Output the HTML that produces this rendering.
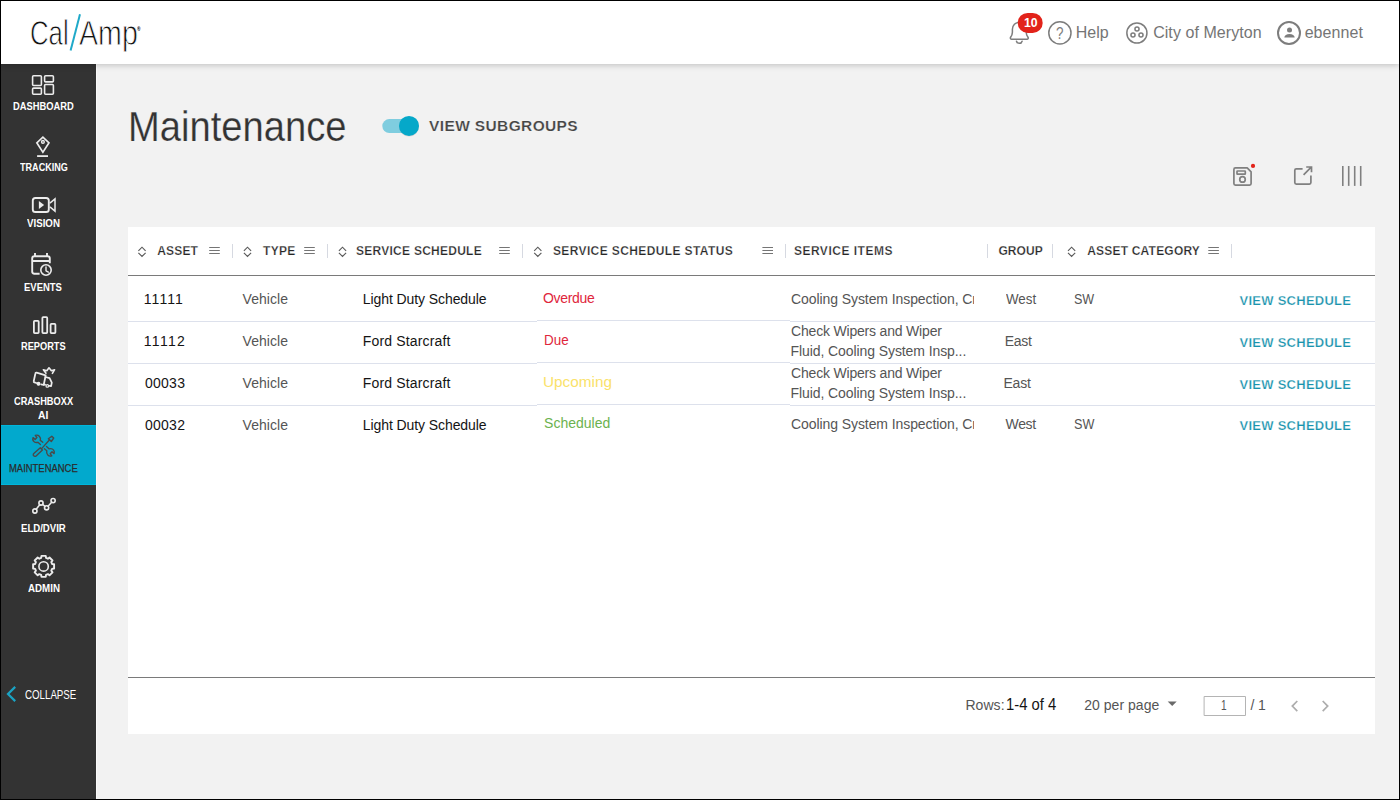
<!DOCTYPE html>
<html lang="en">
<head>
<meta charset="utf-8">
<title>Maintenance</title>
<style>
*{box-sizing:border-box;margin:0;padding:0}
html,body{width:1400px;height:800px;overflow:hidden;background:#f2f2f2}
body{font-family:"Liberation Sans",sans-serif;position:relative;color:#333}
.abs{position:absolute}
.t{position:absolute;white-space:nowrap;z-index:11}
#frame{position:absolute;left:0;top:0;width:1400px;height:800px;border:1px solid #000;z-index:50;pointer-events:none}
#topbar{position:absolute;left:1px;top:1px;width:1398px;height:63px;background:#fff;box-shadow:0 1px 6px rgba(0,0,0,.22);z-index:10}
#side{position:absolute;left:1px;top:64px;width:95px;height:735px;background:#333;z-index:5}
#active{position:absolute;left:1px;top:425px;width:95px;height:60px;background:#02a9cd;border-top:1px solid #00b6db;border-bottom:1px solid #00b6db;z-index:5}
#sideline{position:absolute;left:96px;top:64px;width:1px;height:735px;background:#fafafa;z-index:4}
#card{position:absolute;left:128px;top:227px;width:1247px;height:507px;background:#fff}
.sep{position:absolute;top:244px;width:1px;height:14px;background:#d6d9e1}
.hl{position:absolute;height:1px;background:#dde1ec}
svg{position:absolute;overflow:visible}
</style>
</head>
<body>
<div id="topbar"></div>
<div id="side"></div>
<div id="active"></div>
<div id="sideline"></div>
<div id="card"></div>
<!-- table lines -->
<div class="hl" style="left:128px;top:275px;width:1247px;background:#7a7a7a"></div>
<div class="hl" style="left:128px;top:677px;width:1247px;background:#7a7a7a"></div>
<div class="hl" style="left:128px;top:321px;width:409px"></div><div class="hl" style="left:537px;top:320px;width:253px"></div><div class="hl" style="left:790px;top:321px;width:585px"></div>
<div class="hl" style="left:128px;top:363px;width:409px"></div><div class="hl" style="left:537px;top:362px;width:253px"></div><div class="hl" style="left:790px;top:363px;width:585px"></div>
<div class="hl" style="left:128px;top:405px;width:409px"></div><div class="hl" style="left:537px;top:404px;width:253px"></div><div class="hl" style="left:790px;top:405px;width:585px"></div>
<!-- header separators -->
<div class="sep" style="left:232px"></div><div class="sep" style="left:327px"></div><div class="sep" style="left:522px"></div><div class="sep" style="left:785px"></div><div class="sep" style="left:987px"></div><div class="sep" style="left:1052px"></div><div class="sep" style="left:1231px"></div>
<svg id="icons" width="1400" height="800" viewBox="0 0 1400 800" style="left:0;top:0;z-index:11" fill="none" stroke-linecap="round" stroke-linejoin="round">
<line x1="70.6" y1="50.6" x2="80.0" y2="14.2" stroke="#1fa9c9" stroke-width="2" stroke-linecap="butt"/>
<g stroke="#7d7d7d" stroke-width="1.5"><path d="M1011.6 39.2 H1027 a1.2 1.2 0 0 0 1 -1.9 c-1 -1.4 -1.8 -2.6 -1.8 -5 V29.2 a6.9 6.9 0 0 0 -13.8 0 V32.3 c0 2.400 -0.800 3.600 -1.800 5 a1.2 1.2 0 0 0 1 1.900 Z"/><path d="M1016.5 41.2 a2.9 2.9 0 0 0 5.6 0"/></g>
<rect x="1017.7" y="12.9" width="25" height="20.1" rx="10" fill="#e2231a"/>
<circle cx="1059.9" cy="32.9" r="11.1" stroke="#7d7d7d" stroke-width="1.5"/>
<g stroke="#7d7d7d" stroke-width="1.5"><circle cx="1136.9" cy="33" r="10.05"/><circle cx="1137" cy="29" r="2.05"/><circle cx="1133" cy="35" r="2.05"/><circle cx="1141" cy="35" r="2.05"/></g>
<circle cx="1289" cy="33" r="11" stroke="#7d7d7d" stroke-width="2"/>
<circle cx="1289.5" cy="29.9" r="2.5" fill="#7d7d7d"/>
<path d="M1284.3 37.5 a5.2 3.6 0 0 1 10.4 0 Z" fill="#7d7d7d"/>
<rect x="382.3" y="119.1" width="34" height="14" rx="7" fill="#7fcddf"/>
<circle cx="409" cy="126.6" r="10" fill="#000" opacity="0.12"/>
<circle cx="409" cy="125.9" r="10" fill="#05a8c9"/>
<g stroke="#808080" stroke-width="1.7"><path d="M1235.4 167.9 H1247.2 L1251.1 171.8 V183.6 a1.5 1.5 0 0 1 -1.5 1.5 H1235.4 a1.5 1.5 0 0 1 -1.5 -1.5 V169.4 a1.5 1.5 0 0 1 1.5 -1.500 Z"/><rect x="1237" y="171" width="8.3" height="3.2" rx="0.5"/><circle cx="1242.5" cy="179.4" r="2.75"/></g>
<circle cx="1253" cy="165.9" r="2.1" fill="#e2231a"/>
<g stroke="#808080" stroke-width="1.7" stroke-linecap="butt" stroke-linejoin="miter"><path d="M1302.6 168.8 H1296.3 a1.5 1.5 0 0 0 -1.5 1.5 V182.600 a1.5 1.5 0 0 0 1.5 1.5 H1309.400 a1.5 1.5 0 0 0 1.5 -1.5 V175.4"/><path d="M1303.6 174.8 L1311.2 167.2 M1306.2 167 H1311.5 V172.3"/></g>
<line x1="1342.8" y1="166" x2="1342.8" y2="185.9" stroke="#808080" stroke-width="1.6" stroke-linecap="butt"/>
<line x1="1348.7" y1="166" x2="1348.7" y2="185.9" stroke="#808080" stroke-width="1.6" stroke-linecap="butt"/>
<line x1="1354.7" y1="166" x2="1354.7" y2="185.9" stroke="#808080" stroke-width="1.6" stroke-linecap="butt"/>
<line x1="1360.7" y1="166" x2="1360.7" y2="185.9" stroke="#808080" stroke-width="1.6" stroke-linecap="butt"/>
<path d="M138.4 250.8 L142 247.2 L145.6 250.8 M138.4 252.800 L142 256.400 L145.6 252.800" stroke="#5a5a5a" stroke-width="1.15" stroke-linecap="butt" stroke-linejoin="miter"/>
<path d="M243.9 250.8 L247.5 247.2 L251.1 250.8 M243.9 252.800 L247.5 256.400 L251.1 252.800" stroke="#5a5a5a" stroke-width="1.15" stroke-linecap="butt" stroke-linejoin="miter"/>
<path d="M338.9 250.8 L342.5 247.2 L346.1 250.8 M338.9 252.800 L342.5 256.400 L346.1 252.800" stroke="#5a5a5a" stroke-width="1.15" stroke-linecap="butt" stroke-linejoin="miter"/>
<path d="M534.1999999999999 250.8 L537.8 247.2 L541.4 250.8 M534.1999999999999 252.800 L537.8 256.400 L541.4 252.800" stroke="#5a5a5a" stroke-width="1.15" stroke-linecap="butt" stroke-linejoin="miter"/>
<path d="M1068.0 250.8 L1071.6 247.2 L1075.1999999999998 250.8 M1068.0 252.800 L1071.6 256.400 L1075.1999999999998 252.800" stroke="#5a5a5a" stroke-width="1.15" stroke-linecap="butt" stroke-linejoin="miter"/>
<path d="M209.2 247.500 h10.6 M209.2 250.500 h10.6 M209.2 253.500 h10.6" stroke="#757575" stroke-width="1" stroke-linecap="butt"/>
<path d="M304.2 247.500 h10.6 M304.2 250.500 h10.6 M304.2 253.500 h10.6" stroke="#757575" stroke-width="1" stroke-linecap="butt"/>
<path d="M499.2 247.500 h10.6 M499.2 250.500 h10.6 M499.2 253.500 h10.6" stroke="#757575" stroke-width="1" stroke-linecap="butt"/>
<path d="M762.4 247.500 h10.6 M762.4 250.500 h10.6 M762.4 253.500 h10.6" stroke="#757575" stroke-width="1" stroke-linecap="butt"/>
<path d="M1208.3 247.500 h10.6 M1208.3 250.500 h10.6 M1208.3 253.500 h10.6" stroke="#757575" stroke-width="1" stroke-linecap="butt"/>
<path d="M1167.7 701.5 h9 l-4.5 4.5 Z" fill="#6a6a6a"/>
<rect x="1204.500" y="696.500" width="41" height="19" fill="#fff" stroke="#b4b4b4" stroke-width="1"/>
<path d="M1297.300 701 L1292.300 706.100 L1297.300 711.200" stroke="#adadad" stroke-width="1.700" stroke-linecap="butt" stroke-linejoin="miter"/>
<path d="M1322.700 701 L1327.700 706.100 L1322.700 711.200" stroke="#adadad" stroke-width="1.700" stroke-linecap="butt" stroke-linejoin="miter"/>
<g stroke="#ececec" stroke-width="1.6"><rect x="32.6" y="75.7" width="8.8" height="9.8" rx="1"/><rect x="44.600" y="75.7" width="8.8" height="6.2" rx="1"/><rect x="32.6" y="88.1" width="8.8" height="6.2" rx="1"/><rect x="44.600" y="84.500" width="8.8" height="9.8" rx="1"/></g>
<g stroke="#ececec" stroke-width="1.6" stroke-linejoin="miter"><path d="M42.9 137.100 L49 142.800 L42.9 152.200 L36.800 142.800 Z"/><circle cx="42.9" cy="141.9" r="1.5" stroke-width="1.1" fill="#999"/><path d="M37.100 156.100 H48" stroke-width="1.8" stroke-linecap="butt"/></g>
<g stroke="#ececec" stroke-width="1.9"><rect x="32.8" y="198" width="16" height="14" rx="2.600"/><path d="M50.2 202.800 L55 198.900 V211.100 L50.2 207.200" stroke-width="1.5" stroke-linejoin="miter"/><path d="M38.9 201 V209 L44.100 205 Z" fill="#ececec" stroke="none"/></g>
<g stroke="#ececec" stroke-width="1.9" stroke-linecap="butt"><path d="M39.6 273.800 H34.400 a2.200 2.200 0 0 1 -2.200 -2.200 V258.400 a2.200 2.200 0 0 1 2.200 -2.200 H47.600 a2.200 2.200 0 0 1 2.200 2.200 V263.200"/><path d="M32.2 261 H49.800 M35 253 V256.200 M47 253 V256.200"/><circle cx="46" cy="270" r="5.2" stroke-width="1.6"/><path d="M46 266.900 V270.800 L48.400 272.100" stroke-width="1.4" stroke-linecap="round"/></g>
<g stroke="#ececec" stroke-width="1.8"><rect x="33.9" y="320.900" width="4.800" height="12.200" rx="0.8"/><rect x="42.400" y="317.100" width="4.800" height="16" rx="0.8"/><rect x="50.600" y="323.900" width="4.800" height="9.200" rx="0.8"/></g>
<g stroke="#ececec" stroke-width="1.75"><path d="M36.600 372.700 L45.700 375.300 L43.700 385 L41.200 384.300 M36.400 383 L34.400 382.400 a1 1 0 0 1 -0.700 -1.200 L35.400 373.500 a1 1 0 0 1 1.200 -0.800"/><path d="M45.400 377 L49.600 378.200 L51.800 382.600 L51.100 386.200 L49.500 385.800 M45.100 384.700 L43.700 384.300"/><circle cx="38.500" cy="383.700" r="1.500" fill="#ececec" stroke="none"/><circle cx="38.500" cy="383.700" r="1.100"/><circle cx="47.300" cy="385.900" r="1.300" stroke-width="1.200"/><path d="M46 373.200 L43.400 369.700 L46.800 370.800 L49 367.800 L51.400 370.800 L54.600 369.700 L52.400 373.400" stroke-width="1.600" stroke-linejoin="round"/></g>
<g stroke="#4a4a4a" stroke-width="1.400"><path d="M33.800 453.500 L40.300 447.700 L42.400 449.900 L36.100 455.900 a1.500 1.500 0 0 1 -2.300 -2.400 Z"/><path d="M41.600 448.600 L49.600 439.800"/><path d="M48.400 438.800 L51.800 436.200 L53.700 438 L51.300 441.500 Z"/><path d="M40.400 444.600 L37.900 442.300 c-1.500 0.500 -3.400 0.100 -4.400 -1.200 c-0.800 -1 -0.900 -2.300 -0.500 -3.500 l2.100 1.800 l1.800 -1.900 l-1.600 -2.100 c1.400 -0.500 3 -0.200 4 0.800 c1.200 1.200 1.400 2.800 1 4.200 L42.800 442.200"/><path d="M46.500 446.500 L49.200 448.900 c1.500 -0.500 3.400 -0.100 4.400 1.200 c0.800 1 0.900 2.300 0.500 3.500 l-2.100 -1.800 l-1.800 1.900 l1.600 2.100 c-1.400 0.500 -3 0.200 -4 -0.800 c-1.200 -1.200 -1.400 -2.800 -1 -4.200 L44.400 448.800"/></g>
<g stroke="#ececec" stroke-width="1.600"><line x1="36.17" y1="509.33" x2="39.73" y2="504.67" stroke-width="1.500"/><line x1="42.59" y1="504.37" x2="45.01" y2="506.43" stroke-width="1.500"/><line x1="48.01" y1="506.24" x2="51.69" y2="502.16" stroke-width="1.500"/><circle cx="34.9" cy="511" r="2.100"/><circle cx="41" cy="503" r="2.100"/><circle cx="46.6" cy="507.8" r="2.100"/><circle cx="53.1" cy="500.6" r="2.100"/></g>
<path d="M41.17 557.94 L41.47 555.91 L45.73 555.91 L46.03 557.94 L47.87 558.70 L49.51 557.48 L52.52 560.49 L51.30 562.13 L52.06 563.97 L54.09 564.27 L54.09 568.53 L52.06 568.83 L51.30 570.67 L52.52 572.31 L49.51 575.32 L47.87 574.10 L46.03 574.86 L45.73 576.89 L41.47 576.89 L41.17 574.86 L39.33 574.10 L37.69 575.32 L34.68 572.31 L35.90 570.67 L35.14 568.83 L33.11 568.53 L33.11 564.27 L35.14 563.97 L35.90 562.13 L34.68 560.49 L37.69 557.48 L39.33 558.70 Z" stroke="#ececec" stroke-width="1.900" stroke-linejoin="round"/>
<circle cx="43.6" cy="566.4" r="4.700" stroke="#ececec" stroke-width="1.600"/>
<path d="M15.200 686.900 L8 694 L15.200 701.100" stroke="#1aa3c4" stroke-width="2.200" stroke-linecap="butt" stroke-linejoin="miter"/>
</svg>
<div class="t " style="font-size:16px;line-height:22px;color:#757575;letter-spacing:-0.033px;left:1075.85px;top:22px;">Help</div>
<div class="t " style="font-size:16px;line-height:22px;color:#757575;letter-spacing:0.061px;left:1153.15px;top:22px;">City of Meryton</div>
<div class="t " style="font-size:16px;line-height:22px;color:#757575;letter-spacing:0.067px;left:1304.65px;top:22px;">ebennet</div>
<div class="t " style="font-size:12px;line-height:17px;color:#fff;font-weight:bold;transform:scaleX(1.0204);transform-origin:0 50%;left:1023.53px;top:15px;z-index:12;">10</div>
<div class="t " style="font-size:43.4px;line-height:61px;color:#333;transform:scaleX(0.8794);transform-origin:0 50%;left:128.22px;top:96px;-webkit-text-stroke:0.25px #f2f2f2;">Maintenance</div>
<div class="t " style="font-size:15.5px;line-height:22px;color:#444;font-weight:bold;letter-spacing:0.369px;left:429.05px;top:115px;-webkit-text-stroke:0.2px #f2f2f2;">VIEW SUBGROUPS</div>
<div class="t " style="font-size:11px;line-height:15px;color:#fff;font-weight:bold;transform:scaleX(0.8484);transform-origin:0 50%;left:12.96px;top:99px;z-index:6;">DASHBOARD</div>
<div class="t " style="font-size:11px;line-height:15px;color:#fff;font-weight:bold;transform:scaleX(0.8243);transform-origin:0 50%;left:19.80px;top:160px;z-index:6;">TRACKING</div>
<div class="t " style="font-size:11px;line-height:15px;color:#fff;font-weight:bold;transform:scaleX(0.8828);transform-origin:0 50%;left:27.28px;top:216px;z-index:6;">VISION</div>
<div class="t " style="font-size:11px;line-height:15px;color:#fff;font-weight:bold;transform:scaleX(0.8605);transform-origin:0 50%;left:24.35px;top:280px;z-index:6;">EVENTS</div>
<div class="t " style="font-size:11px;line-height:15px;color:#fff;font-weight:bold;transform:scaleX(0.8404);transform-origin:0 50%;left:21.17px;top:339px;z-index:6;">REPORTS</div>
<div class="t " style="font-size:11px;line-height:15px;color:#fff;font-weight:bold;transform:scaleX(0.8401);transform-origin:0 50%;left:13.98px;top:394px;z-index:6;">CRASHBOXX</div>
<div class="t " style="font-size:11px;line-height:15px;color:#fff;font-weight:bold;transform:scaleX(0.9400);transform-origin:0 50%;left:38.47px;top:408px;z-index:6;">AI</div>
<div class="t " style="font-size:11px;line-height:15px;color:#2b2b2b;transform:scaleX(0.8584);transform-origin:0 50%;left:9.04px;top:461px;z-index:6;-webkit-text-stroke:0.25px #2b2b2b;">MAINTENANCE</div>
<div class="t " style="font-size:11px;line-height:15px;color:#fff;font-weight:bold;transform:scaleX(0.8716);transform-origin:0 50%;left:20.85px;top:521px;z-index:6;">ELD/DVIR</div>
<div class="t " style="font-size:11px;line-height:15px;color:#fff;font-weight:bold;transform:scaleX(0.8857);transform-origin:0 50%;left:27.98px;top:581px;z-index:6;">ADMIN</div>
<div class="t " style="font-size:12px;line-height:17px;color:#fff;transform:scaleX(0.8096);transform-origin:0 50%;left:24.60px;top:687px;z-index:6;">COLLAPSE</div>
<div class="t " style="font-size:12px;line-height:17px;color:#262626;font-weight:bold;letter-spacing:0.163px;left:157.25px;top:243px;-webkit-text-stroke:0.25px #fff;">ASSET</div>
<div class="t " style="font-size:12px;line-height:17px;color:#262626;font-weight:bold;letter-spacing:0.317px;left:263.05px;top:243px;-webkit-text-stroke:0.25px #fff;">TYPE</div>
<div class="t " style="font-size:12px;line-height:17px;color:#262626;font-weight:bold;letter-spacing:0.260px;left:356.00px;top:243px;-webkit-text-stroke:0.25px #fff;">SERVICE SCHEDULE</div>
<div class="t " style="font-size:12px;line-height:17px;color:#262626;font-weight:bold;letter-spacing:0.386px;left:552.90px;top:243px;-webkit-text-stroke:0.25px #fff;">SERVICE SCHEDULE STATUS</div>
<div class="t " style="font-size:12px;line-height:17px;color:#262626;font-weight:bold;letter-spacing:0.508px;left:793.90px;top:243px;-webkit-text-stroke:0.25px #fff;">SERVICE ITEMS</div>
<div class="t " style="font-size:12px;line-height:17px;color:#262626;font-weight:bold;letter-spacing:0.038px;left:998.50px;top:243px;-webkit-text-stroke:0.25px #fff;">GROUP</div>
<div class="t " style="font-size:12px;line-height:17px;color:#262626;font-weight:bold;letter-spacing:0.208px;left:1087.15px;top:243px;-webkit-text-stroke:0.25px #fff;">ASSET CATEGORY</div>
<div class="t " style="font-size:14px;line-height:20px;color:#141414;letter-spacing:1.050px;left:143.80px;top:289px;">11111</div>
<div class="t " style="font-size:14px;line-height:20px;color:#555;letter-spacing:0.058px;left:242.55px;top:289px;">Vehicle</div>
<div class="t " style="font-size:14px;line-height:20px;color:#141414;letter-spacing:-0.083px;left:362.75px;top:289px;">Light Duty Schedule</div>
<div class="t " style="font-size:14px;line-height:20px;color:#141414;letter-spacing:1.300px;left:143.80px;top:331px;">11112</div>
<div class="t " style="font-size:14px;line-height:20px;color:#555;letter-spacing:0.058px;left:242.55px;top:331px;">Vehicle</div>
<div class="t " style="font-size:14px;line-height:20px;color:#141414;letter-spacing:0.165px;left:362.75px;top:331px;">Ford Starcraft</div>
<div class="t " style="font-size:14px;line-height:20px;color:#141414;letter-spacing:0.288px;left:144.90px;top:373px;">00033</div>
<div class="t " style="font-size:14px;line-height:20px;color:#555;letter-spacing:0.058px;left:242.55px;top:373px;">Vehicle</div>
<div class="t " style="font-size:14px;line-height:20px;color:#141414;letter-spacing:0.165px;left:362.75px;top:373px;">Ford Starcraft</div>
<div class="t " style="font-size:14px;line-height:20px;color:#141414;letter-spacing:0.288px;left:144.90px;top:415px;">00032</div>
<div class="t " style="font-size:14px;line-height:20px;color:#555;letter-spacing:0.058px;left:242.55px;top:415px;">Vehicle</div>
<div class="t " style="font-size:14px;line-height:20px;color:#141414;letter-spacing:-0.083px;left:362.75px;top:415px;">Light Duty Schedule</div>
<div class="t " style="font-size:14px;line-height:20px;color:#e0263c;letter-spacing:-0.342px;left:543.05px;top:288px;">Overdue</div>
<div class="t " style="font-size:14px;line-height:20px;color:#e0263c;transform:scaleX(0.9600);transform-origin:0 50%;left:543.50px;top:330px;">Due</div>
<div class="t " style="font-size:14px;line-height:20px;color:#fae26a;transform:scaleX(1.0955);transform-origin:0 50%;left:543.30px;top:372px;">Upcoming</div>
<div class="t " style="font-size:14px;line-height:20px;color:#6bb24e;letter-spacing:0.013px;left:544.05px;top:413px;">Scheduled</div>
<div class="t " style="font-size:14px;line-height:20px;color:#555;letter-spacing:-0.083px;left:791.05px;top:289px;width:183.15px;overflow:hidden;">Cooling System Inspection, Cr</div>
<div class="t " style="font-size:14px;line-height:20px;color:#555;letter-spacing:-0.190px;left:791.05px;top:321px;">Check Wipers and Wiper</div>
<div class="t " style="font-size:14px;line-height:20px;color:#555;letter-spacing:-0.087px;left:790.55px;top:341px;">Fluid, Cooling System Insp...</div>
<div class="t " style="font-size:14px;line-height:20px;color:#555;letter-spacing:-0.190px;left:791.05px;top:363px;">Check Wipers and Wiper</div>
<div class="t " style="font-size:14px;line-height:20px;color:#555;letter-spacing:-0.087px;left:790.55px;top:383px;">Fluid, Cooling System Insp...</div>
<div class="t " style="font-size:14px;line-height:20px;color:#555;letter-spacing:-0.083px;left:791.05px;top:414px;width:183.15px;overflow:hidden;">Cooling System Inspection, Cr</div>
<div class="t " style="font-size:14px;line-height:20px;color:#555;transform:scaleX(0.9524);transform-origin:0 50%;left:1006.00px;top:289px;">West</div>
<div class="t " style="font-size:14px;line-height:20px;color:#555;letter-spacing:-0.250px;left:1004.75px;top:331px;">East</div>
<div class="t " style="font-size:14px;line-height:20px;color:#555;letter-spacing:-0.183px;left:1003.45px;top:373px;">East</div>
<div class="t " style="font-size:14px;line-height:20px;color:#555;letter-spacing:-0.333px;left:1005.50px;top:414px;">West</div>
<div class="t " style="font-size:14px;line-height:20px;color:#555;transform:scaleX(0.8966);transform-origin:0 50%;left:1074.13px;top:289px;">SW</div>
<div class="t " style="font-size:14px;line-height:20px;color:#555;transform:scaleX(0.9011);transform-origin:0 50%;left:1074.02px;top:414px;">SW</div>
<div class="t " style="font-size:13px;line-height:18px;color:#1a93ad;font-weight:bold;letter-spacing:0.258px;left:1239.55px;top:292px;-webkit-text-stroke:0.25px #fff;">VIEW SCHEDULE</div>
<div class="t " style="font-size:13px;line-height:18px;color:#1a93ad;font-weight:bold;letter-spacing:0.258px;left:1239.55px;top:334px;-webkit-text-stroke:0.25px #fff;">VIEW SCHEDULE</div>
<div class="t " style="font-size:13px;line-height:18px;color:#1a93ad;font-weight:bold;letter-spacing:0.258px;left:1239.55px;top:376px;-webkit-text-stroke:0.25px #fff;">VIEW SCHEDULE</div>
<div class="t " style="font-size:13px;line-height:18px;color:#1a93ad;font-weight:bold;letter-spacing:0.258px;left:1239.55px;top:417px;-webkit-text-stroke:0.25px #fff;">VIEW SCHEDULE</div>
<div class="t " style="font-size:14px;line-height:20px;color:#555;letter-spacing:0.050px;left:965.45px;top:695px;">Rows:</div>
<div class="t " style="font-size:16px;line-height:22px;color:#141414;transform:scaleX(0.9257);transform-origin:0 50%;left:1005.94px;top:694px;">1-4 of 4</div>
<div class="t " style="font-size:14px;line-height:20px;color:#555;letter-spacing:0.025px;left:1084.25px;top:695px;">20 per page</div>
<div class="t " style="font-size:14px;line-height:20px;color:#555;transform:scaleX(0.7167);transform-origin:0 50%;left:1221.08px;top:695px;">1</div>
<div class="t " style="font-size:14px;line-height:20px;color:#555;letter-spacing:-0.075px;left:1250.40px;top:695px;">/ 1</div>
<div class="t " style="font-size:35.9px;line-height:50px;color:#111;transform:scaleX(0.7176);transform-origin:0 50%;left:29.94px;top:8px;-webkit-text-stroke:0.9px #fff;z-index:12;">Cal</div>
<div class="t " style="font-size:35.9px;line-height:50px;color:#111;transform:scaleX(0.7972);transform-origin:0 50%;left:78.90px;top:8px;-webkit-text-stroke:0.9px #fff;z-index:12;">Amp</div>
<div class="t " style="font-size:6px;line-height:8px;color:#000;font-weight:bold;transform:scaleX(0.8000);transform-origin:0 50%;left:137.20px;top:25px;z-index:12;">®</div>
<div class="t " style="font-size:16px;line-height:22px;color:#7d7d7d;transform:scaleX(0.8400);transform-origin:0 50%;left:1056.37px;top:23px;z-index:12;">?</div>
<div id="frame"></div>
</body>
</html>
